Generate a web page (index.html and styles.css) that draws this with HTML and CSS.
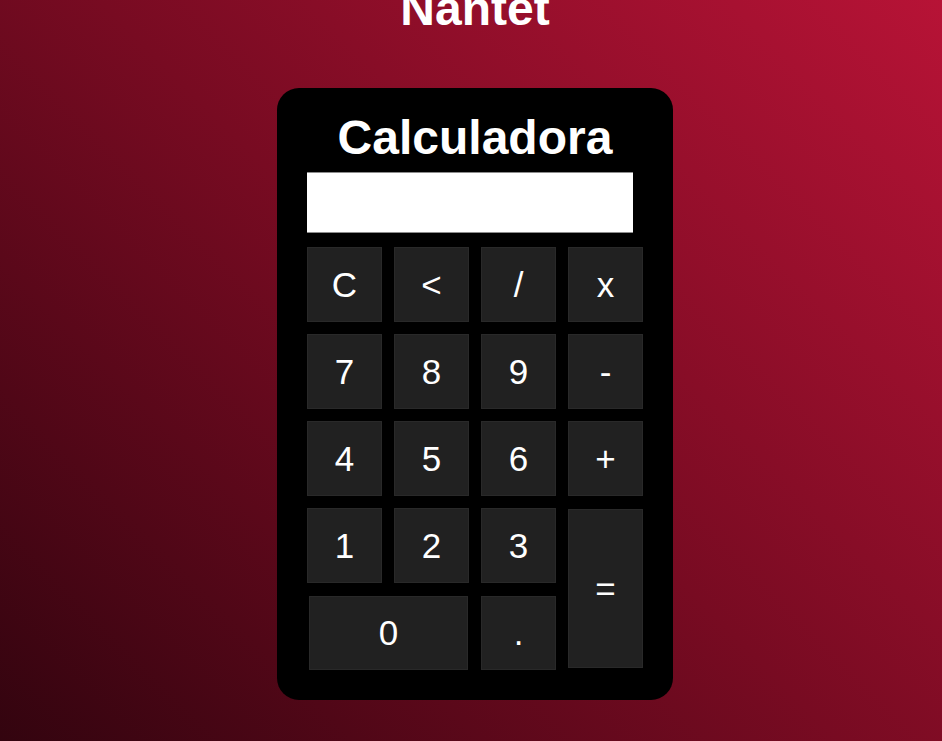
FILE: index.html
```html
<!DOCTYPE html>
<html lang="pt">
<head>
<meta charset="utf-8">
<title>Calculadora</title>
<link rel="stylesheet" href="styles.css">
</head>
<body>
<h1 class="brand">Nantet</h1>
<div class="calc">
  <h2 class="calc-title">Calculadora</h2>
  <div class="display"></div>
  <div class="keys">
    <button class="key">C</button>
    <button class="key">&lt;</button>
    <button class="key">/</button>
    <button class="key">x</button>
    <button class="key">7</button>
    <button class="key">8</button>
    <button class="key">9</button>
    <button class="key">-</button>
    <button class="key">4</button>
    <button class="key">5</button>
    <button class="key">6</button>
    <button class="key">+</button>
    <button class="key">1</button>
    <button class="key">2</button>
    <button class="key">3</button>
    <button class="key key-eq">=</button>
    <button class="key key-zero">0</button>
    <button class="key key-dot">.</button>
  </div>
</div>
</body>
</html>
```

FILE: styles.css
```css
html, body {
  margin: 0;
  padding: 0;
}
body {
  box-sizing: border-box;
  width: 942px;
  height: 741px;
  padding-left: 8px;
  overflow: hidden;
  background: linear-gradient(45deg, #33040f 0%, #780b22 50%, #b71336 100%);
  font-family: "Liberation Sans", Arial, sans-serif;
  color: #fff;
  display: flex;
  flex-direction: column;
  align-items: center;
}
.brand {
  font-size: 48px;
  font-weight: bold;
  line-height: 55px;
  margin: -19px 0 52px;
}
.calc {
  width: 336px;
  background: #000;
  border-radius: 22px;
  padding: 22px 30px 30px;
  display: flex;
  flex-direction: column;
}
.calc-title {
  margin: 0 0 7px;
  font-size: 48px;
  font-weight: bold;
  line-height: 55px;
  text-align: center;
}
.display {
  width: 326px;
  height: 61px;
  box-sizing: border-box;
  background: #fff;
  border-top: 1px solid #8c8c8c;
  border-bottom: 1px solid #8c8c8c;
  margin-bottom: 14px;
}
.keys {
  display: grid;
  grid-template-columns: repeat(4, 75px);
  grid-auto-rows: 75px;
  gap: 12px;
}
.key {
  background: #212121;
  border: 1px solid #292929;
  color: #fff;
  font-family: "Liberation Sans", Arial, sans-serif;
  font-size: 35px;
  padding: 0;
  margin: 0;
}
.key-eq {
  grid-row: span 2;
  margin: 1px 0 2px;
}
.key-zero {
  grid-column: span 2;
  margin: 1px 1px 0 2px;
}
.key-dot {
  margin-top: 1px;
}
```
